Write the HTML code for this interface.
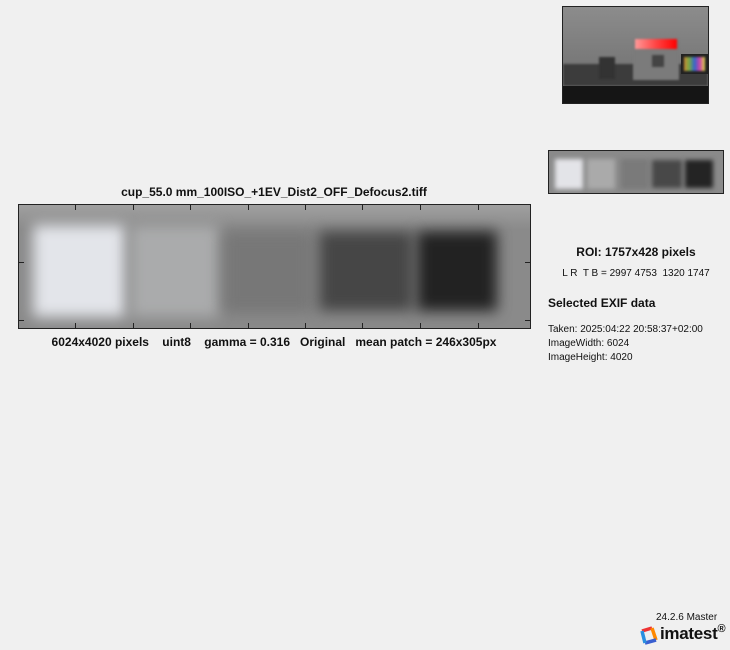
<!DOCTYPE html><html><head><style>
body{margin:0;width:730px;height:650px;background:#f0f0f0;font-family:"Liberation Sans",sans-serif;position:relative;overflow:hidden;color:#111}
.a{position:absolute}
.bl{position:absolute;filter:blur(7px)}
.t{position:absolute;background:#222}
</style></head><body>
<div class="a" style="left:562px;top:6px;width:145px;height:96px;border:1px solid #222;overflow:hidden;background:#7c7c7c">
<div class="a" style="left:0;top:0;width:145px;height:60px;background:linear-gradient(#8c8c8c,#777)"></div>
<div class="a" style="left:0;top:57px;width:145px;height:22px;background:#3c3c3c;filter:blur(1px)"></div>
<div class="a" style="left:0;top:79px;width:145px;height:17px;background:#151515"></div>
<div class="a" style="left:70px;top:33px;width:46px;height:40px;background:#7b7b7b;filter:blur(1px)"></div>
<div class="a" style="left:72px;top:32px;width:42px;height:10px;background:linear-gradient(90deg,#f99,#f44,#f00);filter:blur(1px)"></div>
<div class="a" style="left:89px;top:48px;width:12px;height:12px;background:#444;filter:blur(1px)"></div>
<div class="a" style="left:36px;top:50px;width:16px;height:22px;background:#333;filter:blur(1px)"></div>
<div class="a" style="left:118px;top:47px;width:27px;height:20px;background:#222"></div>
<div class="a" style="left:121px;top:50px;width:21px;height:14px;background:linear-gradient(90deg,#c83,#7a4,#36c,#c4a,#dd4);filter:blur(1px)"></div>
</div>
<div class="a" style="left:548px;top:150px;width:174px;height:42px;border:1px solid #222;overflow:hidden;background:#8a8a8a">
<div class="bl" style="left:6px;top:8px;width:28px;height:30px;background:#e3e4e8;filter:blur(2.5px)"></div>
<div class="bl" style="left:38px;top:8px;width:28px;height:30px;background:#aaa;filter:blur(2.5px)"></div>
<div class="bl" style="left:72px;top:8px;width:28px;height:30px;background:#7a7a7a;filter:blur(2.5px)"></div>
<div class="bl" style="left:103px;top:9px;width:30px;height:28px;background:#484848;filter:blur(2.5px)"></div>
<div class="bl" style="left:136px;top:9px;width:28px;height:28px;background:#242424;filter:blur(2.5px)"></div>
</div>
<div class="a" style="left:0;top:185px;width:548px;text-align:center;font-size:12px;font-weight:bold">cup_55.0 mm_100ISO_+1EV_Dist2_OFF_Defocus2.tiff</div>
<div class="a" style="left:18px;top:204px;width:511px;height:123px;border:1px solid #222;overflow:hidden;background:linear-gradient(#a0a0a0,#8a8a8a 20%,#8a8a8a)">
<div class="bl" style="left:14px;top:20px;width:92px;height:92px;background:#e3e5ea"></div>
<div class="bl" style="left:112px;top:20px;width:88px;height:92px;background:#aaabac"></div>
<div class="bl" style="left:204px;top:26px;width:90px;height:82px;background:#777"></div>
<div class="bl" style="left:300px;top:26px;width:94px;height:80px;background:#464646"></div>
<div class="bl" style="left:398px;top:26px;width:80px;height:80px;background:#222"></div>
<div class="t" style="left:56px;top:0;width:1px;height:5px"></div><div class="t" style="left:56px;bottom:0;width:1px;height:5px"></div>
<div class="t" style="left:114px;top:0;width:1px;height:5px"></div><div class="t" style="left:114px;bottom:0;width:1px;height:5px"></div>
<div class="t" style="left:171px;top:0;width:1px;height:5px"></div><div class="t" style="left:171px;bottom:0;width:1px;height:5px"></div>
<div class="t" style="left:229px;top:0;width:1px;height:5px"></div><div class="t" style="left:229px;bottom:0;width:1px;height:5px"></div>
<div class="t" style="left:286px;top:0;width:1px;height:5px"></div><div class="t" style="left:286px;bottom:0;width:1px;height:5px"></div>
<div class="t" style="left:343px;top:0;width:1px;height:5px"></div><div class="t" style="left:343px;bottom:0;width:1px;height:5px"></div>
<div class="t" style="left:401px;top:0;width:1px;height:5px"></div><div class="t" style="left:401px;bottom:0;width:1px;height:5px"></div>
<div class="t" style="left:459px;top:0;width:1px;height:5px"></div><div class="t" style="left:459px;bottom:0;width:1px;height:5px"></div>
<div class="t" style="left:0;top:57px;width:5px;height:1px"></div><div class="t" style="right:0;top:57px;width:5px;height:1px"></div>
<div class="t" style="left:0;top:115px;width:5px;height:1px"></div><div class="t" style="right:0;top:115px;width:5px;height:1px"></div>
</div>
<div class="a" style="left:0;top:335px;width:548px;text-align:center;font-size:12px;font-weight:bold;white-space:pre">6024x4020 pixels    uint8    gamma = 0.316   Original   mean patch = 246x305px</div>
<div class="a" style="left:548px;top:245px;width:176px;text-align:center;font-size:12px;font-weight:bold">ROI:  1757x428 pixels</div>
<div class="a" style="left:548px;top:268px;width:176px;text-align:center;font-size:10px;white-space:pre">L R  T B = 2997 4753  1320 1747</div>
<div class="a" style="left:548px;top:296px;font-size:12px;font-weight:bold">Selected EXIF data</div>
<div class="a" style="left:548px;top:323px;font-size:10px;line-height:14px">Taken: 2025:04:22 20:58:37+02:00<br>ImageWidth:  6024<br>ImageHeight:  4020</div>
<div class="a" style="left:656px;top:612px;font-size:10px">24.2.6 Master</div>
<svg class="a" style="left:639px;top:626px" width="19" height="19" viewBox="0 0 19 19"><path d="M3 5 L13 2" stroke="#e33" stroke-width="3.5" fill="none"/><path d="M13 2 L17 14" stroke="#f80" stroke-width="3.5" fill="none"/><path d="M17 14 L6 17" stroke="#3a5fd0" stroke-width="3.5" fill="none"/><path d="M6 17 L3 5" stroke="#2a8fe0" stroke-width="3.5" fill="none"/></svg>
<div class="a" style="left:660px;top:623px;font-size:17px;font-weight:bold;letter-spacing:-0.3px">imatest<span style="font-size:11px;vertical-align:7px">®</span></div>
</body></html>
